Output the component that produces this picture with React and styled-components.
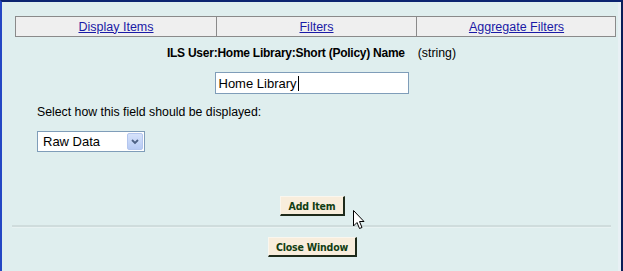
import React from "react";
import styled, { createGlobalStyle } from "styled-components";

const Global = createGlobalStyle`
  html, body { margin: 0; padding: 0; background: #dfeeee; }
  body { font-family: "Liberation Sans", Arial, sans-serif; }
`;

const Window = styled.div`
  position: relative;
  width: 623px;
  height: 271px;
  box-sizing: border-box;
  background: #dfeeee;
  border-top: 2px solid #0b2470;
  border-left: 2px solid #2447c4;
  border-right: 2px solid #0a1d58;
  box-shadow: inset -3px 0 0 #e8f0f4;
  overflow: hidden;
`;

const Tabs = styled.div`
  display: grid;
  grid-template-columns: 200px 200px 200px;
  margin: 14px 0 0 13px;
  width: 601px;
  box-sizing: border-box;
  border: 1px solid #8a8a8a;
  background: #efefef;
`;

const Tab = styled.div`
  height: 19px;
  display: flex;
  align-items: center;
  justify-content: center;
  border-left: ${(p) => (p.$first ? "none" : "1px solid #8a8a8a")};
  font-size: 12.5px;
`;

const TabLink = styled.a`
  color: #1a1aa6;
  text-decoration: underline;
  cursor: pointer;
`;

const TitleRow = styled.div`
  display: flex;
  justify-content: center;
  align-items: center;
  gap: 13px;
  margin-top: 9px;
  height: 14px;
  font-size: 12px;
  color: #000;
  padding-left: 0;
`;

const FieldName = styled.span`
  font-weight: bold;
  letter-spacing: -0.25px;
`;

const TypeNote = styled.span`
  font-size: 12.3px;
`;

const InputRow = styled.div`
  display: flex;
  justify-content: center;
  margin-top: 12px;
  padding-left: 0;
`;

const TextBox = styled.div`
  width: 194px;
  height: 22px;
  box-sizing: border-box;
  border: 1px solid #7f9db9;
  background: #fff;
  display: flex;
  align-items: center;
  padding-left: 3px;
  font-size: 13px;
  color: #000;
`;

const Caret = styled.span`
  display: inline-block;
  width: 1px;
  height: 15px;
  background: #000;
  margin-left: 1px;
`;

const Label = styled.div`
  margin: 11px 0 0 35px;
  font-size: 12.3px;
  color: #000;
  height: 14px;
  line-height: 14px;
`;

const Select = styled.div`
  margin: 12px 0 0 35px;
  width: 108px;
  height: 21px;
  box-sizing: border-box;
  border: 1px solid #7f9db9;
  background: #fff;
  display: flex;
  align-items: center;
  justify-content: space-between;
  padding: 0 1px 0 5px;
  font-size: 13px;
  color: #000;
`;

const DropBtn = styled.div`
  width: 16px;
  height: 17px;
  box-sizing: border-box;
  border: 1px solid #b4c6ee;
  border-radius: 2px;
  background: linear-gradient(#d6e2fb, #b7cbf4);
  display: flex;
  align-items: center;
  justify-content: center;
`;

const ButtonRow = styled.div`
  display: flex;
  justify-content: center;
  margin-top: ${(p) => p.$mt}px;
  padding-left: 2px;
`;

const Btn = styled.div`
  width: ${(p) => p.$w}px;
  height: 20px;
  box-sizing: border-box;
  background: #f8eddc;
  border-top: 1px solid #faf6ee;
  border-left: 1px solid #faf6ee;
  border-right: 2px solid #1e2a1a;
  border-bottom: 2px solid #1e2a1a;
  display: flex;
  align-items: center;
  justify-content: center;
  font-family: "DejaVu Sans Condensed", "DejaVu Sans", Verdana, sans-serif;
  font-stretch: condensed;
  font-weight: bold;
  font-size: 10.5px;
  color: #123d12;
  letter-spacing: -0.2px;
`;

const Rule = styled.div`
  margin: 9px 10px 0 10px;
  height: 0;
  border-top: 2px solid #cfdcdc;
  border-bottom: 1px solid #e8f2f2;
`;

const Cursor = styled.svg`
  position: absolute;
  left: 350px;
  top: 207px;
`;

export default function App() {
  return (
    <>
      <Global />
      <Window>
        <Tabs>
          <Tab $first><TabLink>Display Items</TabLink></Tab>
          <Tab><TabLink>Filters</TabLink></Tab>
          <Tab><TabLink>Aggregate Filters</TabLink></Tab>
        </Tabs>
        <TitleRow>
          <FieldName>ILS User:Home Library:Short (Policy) Name</FieldName>
          <TypeNote>(string)</TypeNote>
        </TitleRow>
        <InputRow>
          <TextBox>Home Library<Caret /></TextBox>
        </InputRow>
        <Label>Select how this field should be displayed:</Label>
        <Select>
          <span>Raw Data</span>
          <DropBtn>
            <svg width="8" height="6" viewBox="0 0 8 6">
              <path d="M1 1 L4 4 L7 1" fill="none" stroke="#4d6185" strokeWidth="1.8" />
            </svg>
          </DropBtn>
        </Select>
        <ButtonRow $mt={44}>
          <Btn $w={65}>Add Item</Btn>
        </ButtonRow>
        <Rule />
        <ButtonRow $mt={9}>
          <Btn $w={89}>Close Window</Btn>
        </ButtonRow>
        <Cursor width="13" height="22" viewBox="0 0 13 22">
          <path d="M1.5 1.5 L1.5 17 L5 13.5 L7.5 19.5 L10 18.5 L7.5 12.5 L12 12.5 Z" fill="#fff" stroke="#000" strokeWidth="1" strokeLinejoin="miter" />
        </Cursor>
      </Window>
    </>
  );
}
